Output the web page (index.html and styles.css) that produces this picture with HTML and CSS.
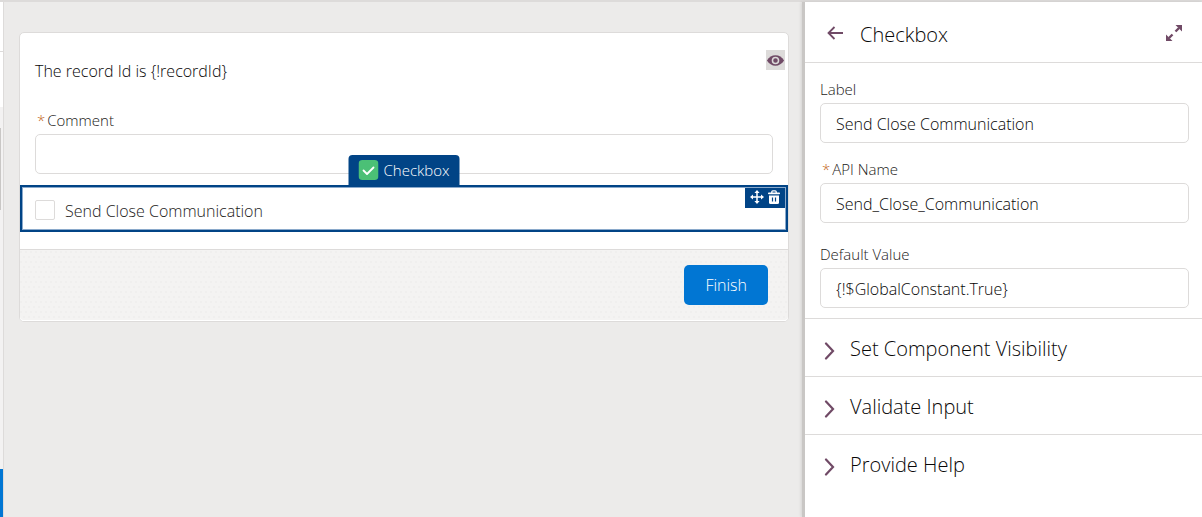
FILE: index.html
```html
<!DOCTYPE html>
<html lang="en">
<head>
    <meta charset="UTF-8">
    <meta name="viewport" content="width=device-width, initial-scale=1.0">
    <title>Screen Flow Editor</title>
    <link rel="stylesheet" href="styles.css">
</head>
<body>

    <div class="editor">

        <!-- Edge of the component palette -->
        <div class="palette">
            <div class="palette-header"></div>
            <div class="palette-search"></div>
            <div class="palette-list"><div class="palette-scrollbar"></div></div>
            <div class="palette-footer"></div>
        </div>

        <main class="canvas">
            <form class="screen-card">
                <div class="screen-body">
                    <div class="display-text">
                        <p>The record Id is {!recordId}</p>
                        <button type="button" class="visibility-button" aria-label="Component visibility">
                            <svg viewBox="0 0 20 20" width="19" height="20">
                                <path d="M1 10.500C3 7 6.500 5 10 5s7 2 9 5.500C17 14 13.500 16 10 16s-7-2-9-5.500z" fill="#704a66"/>
                                <circle cx="10" cy="10.500" r="3.200" fill="#704a66" stroke="#dddbda" stroke-width="1.600"/>
                            </svg>
                        </button>
                    </div>

                    <div class="comment-field">
                        <label for="comment"><span class="required">*</span>Comment</label>
                        <input type="text" id="comment">
                    </div>

                    <div class="selected-component">
                        <div class="component-tab">
                            <svg viewBox="0 0 20 20" width="20" height="20">
                                <rect width="20" height="20" rx="4" fill="#4bc076"/>
                                <path d="M5 10.500l3.500 3.500 6.500-6.500" fill="none" stroke="#fff" stroke-width="1.800" stroke-linecap="round" stroke-linejoin="round"/>
                            </svg>
                            <span>Checkbox</span>
                        </div>
                        <input type="checkbox" id="sendClose">
                        <label for="sendClose">Send Close Communication</label>
                        <div class="component-actions">
                            <button type="button" aria-label="Move">
                                <svg viewBox="0 0 14 14" width="14" height="14">
                                    <path d="M7 2v10M2 7h10" stroke="#fff" stroke-width="1.500"/>
                                    <path d="M7 0l2.600 3H4.400zM7 14l2.600-3H4.400zM0 7l3-2.600v5.200zM14 7l-3-2.600v5.200z" fill="#fff"/>
                                </svg>
                            </button>
                            <button type="button" aria-label="Delete">
                                <svg viewBox="0 0 14 14" width="14" height="14">
                                    <path d="M4.800 3V1.800q0-1 1-1h2.400q1 0 1 1V3" fill="none" stroke="#fff" stroke-width="1.300"/>
                                    <rect x="1" y="2.500" width="12" height="1.800" rx="0.800" fill="#fff"/>
                                    <path d="M2 5.500h10V12.500q0 1.500-1.500 1.500h-7Q2 14 2 12.500z" fill="#fff"/>
                                    <path d="M5.500 7.500v4M8.500 7.500v4" stroke="#014486" stroke-width="1.200"/>
                                </svg>
                            </button>
                        </div>
                    </div>
                </div>

                <footer class="screen-footer">
                    <button type="button" class="finish-button">Finish</button>
                </footer>
            </form>
        </main>

        <aside class="properties">
            <header class="properties-header">
                <button type="button" aria-label="Back">
                    <svg viewBox="0 0 18 16" width="18" height="16">
                        <path d="M17 8H2.500M8.500 2l-6 6 6 6" fill="none" stroke="#704a66" stroke-width="1.800"/>
                    </svg>
                </button>
                <h1>Checkbox</h1>
                <button type="button" aria-label="Expand">
                    <svg viewBox="0 0 18 18" width="18" height="18">
                        <path d="M10.500 7.500L14 4M7.500 10.500L4 14" stroke="#704a66" stroke-width="2.400"/>
                        <path d="M10.500 1H17v6.500zM1 10.500V17h6.500z" fill="#704a66"/>
                    </svg>
                </button>
            </header>

            <div class="properties-fields">
                <div class="field">
                    <label for="fieldLabel">Label</label>
                    <input type="text" id="fieldLabel" value="Send Close Communication">
                </div>
                <div class="field">
                    <label for="apiName"><span class="required">*</span>API Name</label>
                    <input type="text" id="apiName" value="Send_Close_Communication">
                </div>
                <div class="field field-default">
                    <label for="defaultValue">Default Value</label>
                    <input type="text" id="defaultValue" value="{!$GlobalConstant.True}">
                </div>
            </div>

            <button type="button" class="section">
                <svg viewBox="0 0 12 18" width="12" height="18"><path d="M3 1.500L10 9l-7 7.500" fill="none" stroke="#704a66" stroke-width="2.200" stroke-linecap="round"/></svg>
                Set Component Visibility
            </button>
            <button type="button" class="section">
                <svg viewBox="0 0 12 18" width="12" height="18"><path d="M3 1.500L10 9l-7 7.500" fill="none" stroke="#704a66" stroke-width="2.200" stroke-linecap="round"/></svg>
                Validate Input
            </button>
            <button type="button" class="section">
                <svg viewBox="0 0 12 18" width="12" height="18"><path d="M3 1.500L10 9l-7 7.500" fill="none" stroke="#704a66" stroke-width="2.200" stroke-linecap="round"/></svg>
                Provide Help
            </button>
        </aside>

    </div>

</body>
</html>
```

FILE: styles.css
```css
* {
    box-sizing: border-box;
}
body {
    margin: 0;
    font-family: "Open Sans", "Noto Sans", sans-serif;
    font-size: 16px;
    font-weight: 340;
    line-height: 20px;
    color: #080707;
    background-color: #ecebea;
}
button, input {
    font: inherit;
    color: inherit;
}
button {
    padding: 0;
    border: none;
    background: none;
    cursor: pointer;
}
svg {
    display: block;
    flex: none;
}
.editor {
    display: flex;
    min-height: 100vh;
    border-top: 2px solid #dddbda;
}

/* Palette */
.palette {
    display: flex;
    flex-direction: column;
    flex: none;
    width: 4px;
    border-right: 1px solid #dddbda;
    background-color: white;
}
.palette-header {
    height: 50px;
    border-bottom: 1px solid #dddbda;
}
.palette-search {
    height: 55px;
}
.palette-list {
    flex: 1;
    padding-top: 21px;
    background-color: #f3f2f2;
}
.palette-scrollbar {
    width: 1px;
    height: 82px;
    background-color: #c9c7c5;
}
.palette-footer {
    height: 48px;
    background-color: #0176d3;
}

/* Canvas */
.canvas {
    flex: 1;
    padding: 30px 13px 30px 15px;
}
.screen-card {
    border: 1px solid #dddbda;
    border-radius: 5px;
    background-color: white;
}
.screen-body {
    padding-bottom: 17px;
}
.display-text {
    display: flex;
    justify-content: space-between;
    align-items: flex-start;
    padding: 17px 3px 0 15px;
}
.display-text p {
    margin: 11px 0 0;
}
.visibility-button {
    background-color: #dddbda;
}
.comment-field {
    padding: 29px 15px 11px;
}
label {
    color: #1c1a19;
}
.comment-field label,
.field label {
    display: block;
    margin-bottom: 4px;
    font-size: 15px;
}
.required {
    margin: 0 2px;
    color: #c4661a;
}
input[type="text"] {
    display: block;
    width: 100%;
    height: 40px;
    padding: 2px 15px 0;
    border: 1px solid #dddbda;
    border-radius: 5px;
    background-color: white;
}
.selected-component {
    position: relative;
    display: flex;
    align-items: center;
    gap: 10px;
    height: 47px;
    padding: 4px 13px 0;
    border: 2px solid #014486;
    box-shadow: inset 0 0 0 1px #8aa9cb;
}
.selected-component input {
    appearance: none;
    width: 20px;
    height: 20px;
    margin: 0 0 2px;
    border: 1px solid #dddbda;
    border-radius: 2px;
    background-color: white;
}
.component-tab {
    position: absolute;
    left: 50%;
    bottom: 100%;
    display: flex;
    align-items: center;
    gap: 5px;
    padding: 5px 10px 7px;
    border-radius: 4px 4px 0 0;
    background-color: #014486;
    color: white;
    transform: translateX(-50%);
}
.component-tab span {
    font-size: 15px;
}
.component-actions {
    position: absolute;
    top: 1px;
    right: 1px;
    display: flex;
    gap: 3px;
    padding: 2px 4px 4px 5px;
    background-color: #014486;
}
.screen-footer {
    display: flex;
    justify-content: flex-end;
    padding: 15px 20px;
    border-top: 1px solid #dddbda;
    border-bottom: 1px solid white;
    border-radius: 0 0 4px 4px;
    background-color: #f4f3f2;
    background-image:
        radial-gradient(circle at 1px 2px, #f0efee 1px, transparent 1px),
        radial-gradient(circle at 4px 7px, #f0efee 1px, transparent 1px);
    background-size: 5px 10px;
}
.finish-button {
    height: 40px;
    padding: 0 21px;
    border-radius: 5px;
    background-color: #0176d3;
    color: white;
}

/* Properties */
.properties {
    flex: 0 1 400px;
    min-width: 300px;
    border-left: 3px solid #c9c7c5;
    box-shadow: -1px 0 3px rgba(0,0,0,0.1);
    background-color: white;
}
.properties-header {
    display: flex;
    align-items: center;
    height: 61px;
    padding: 2px 19px 0 21px;
    border-bottom: 1px solid #dddbda;
}
.properties-header h1 {
    flex: 1;
    margin: 4px 0 0 16px;
    font-size: 20px;
    line-height: 24px;
    font-weight: inherit;
}
.properties-fields {
    display: flex;
    flex-direction: column;
    gap: 16px;
    padding: 16px 13px 10px 15px;
}
.field-default {
    padding-top: 5px;
}
.section {
    display: flex;
    align-items: center;
    gap: 15px;
    width: 100%;
    padding: 18px 18px 15px;
    border-top: 1px solid #dddbda;
    font-size: 20px;
    line-height: 24px;
    text-align: left;
}
.section svg {
    margin-top: 3px;
}
```
